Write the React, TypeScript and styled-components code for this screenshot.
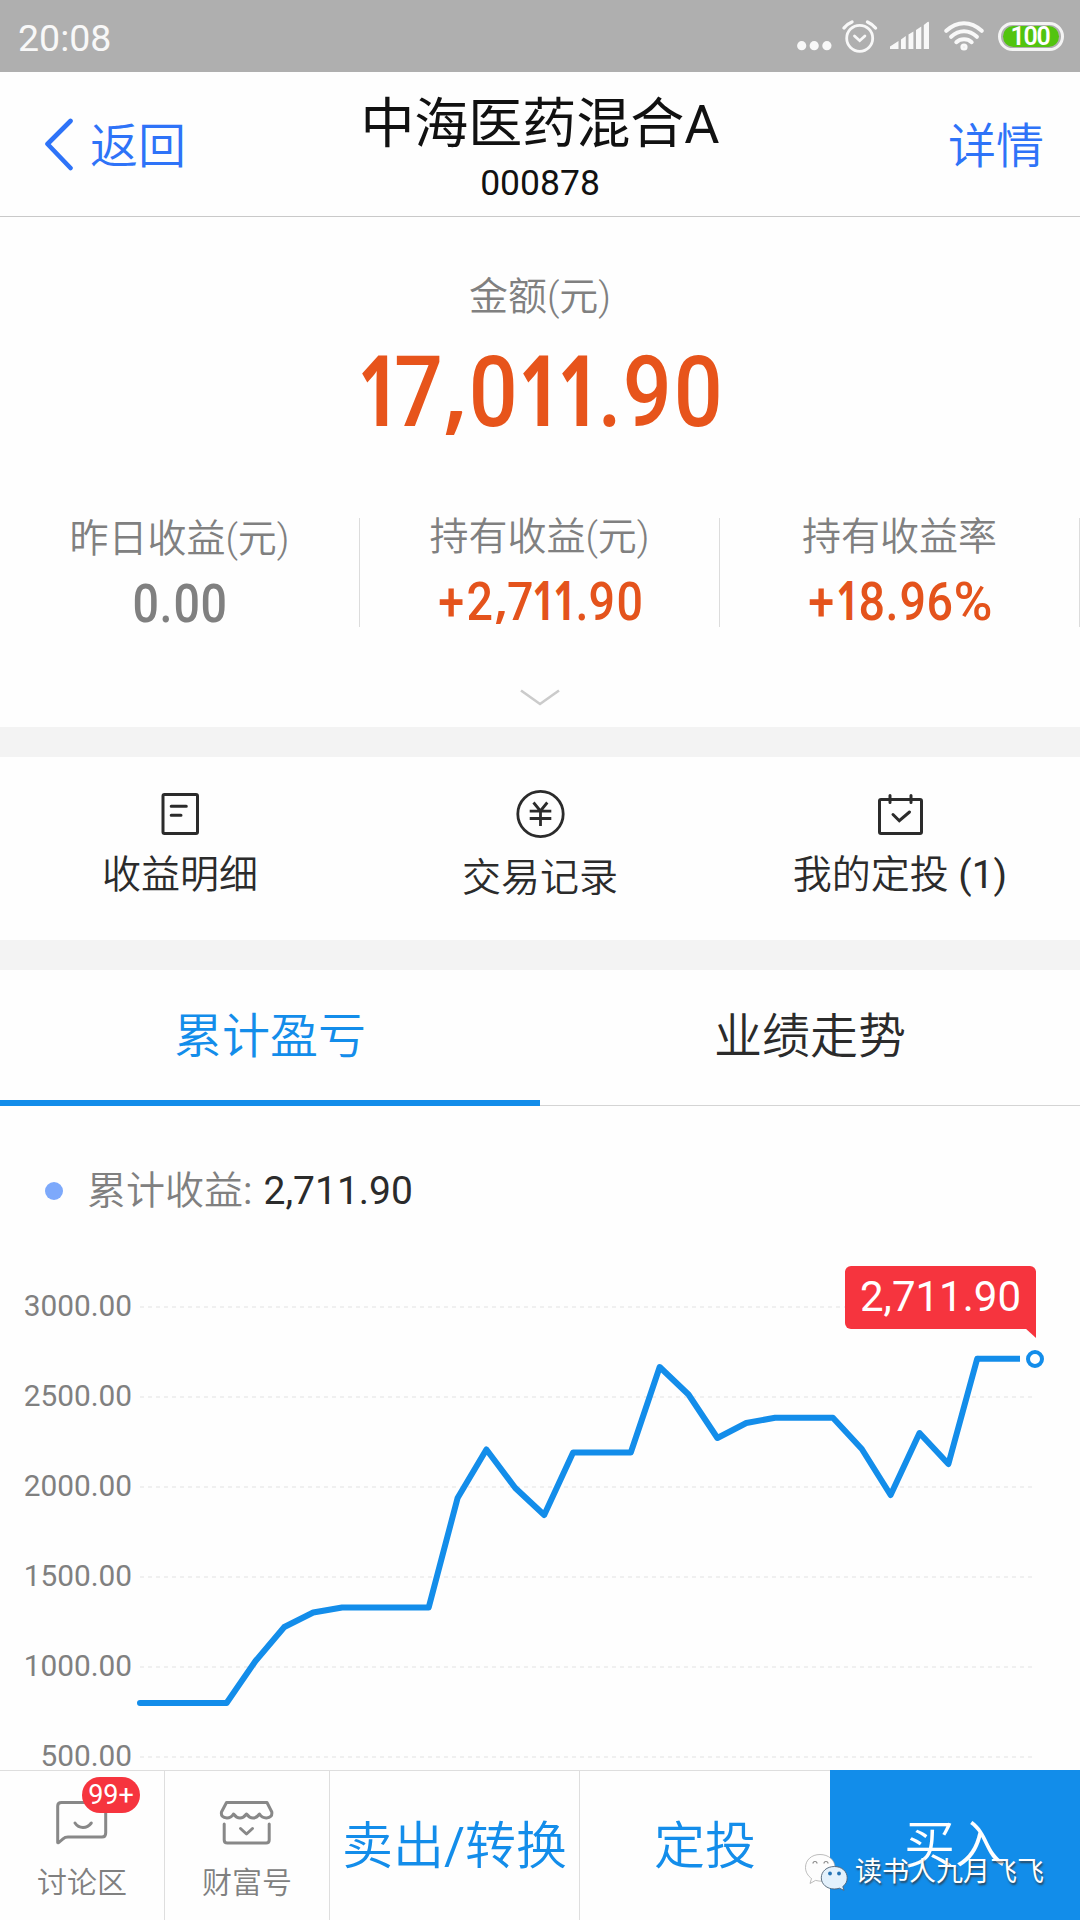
import React from "react";
import styled, { createGlobalStyle } from "styled-components";

const GlobalStyle = createGlobalStyle`
  *, *::before, *::after { box-sizing: border-box; }
  body {
    margin: 0;
    background: #fefefe;
    font-family: Roboto, "Noto Sans CJK SC", sans-serif;
    font-weight: 350;
    color: #2b2b2b;
  }
`;

const Screen = styled.div`
  width: 1080px;
  height: 1920px;
  display: flex;
  flex-direction: column;
  overflow: hidden;
  background: #fefefe;
`;

/* Latin runs inside light Chinese labels keep the regular weight. */
const Latin = styled.span`
  font-weight: 400;
`;

/* ---------- status bar ---------- */

const StatusBar = styled.div`
  flex: none;
  height: 72px;
  display: flex;
  align-items: center;
  justify-content: space-between;
  padding: 4px 16px 0 18px;
  background: #afafaf;
  color: #f8f8f8;
`;

const Clock = styled.span`
  font-size: 37.5px;
  font-weight: 400;
  line-height: 42px;
  margin-top: -1px;
`;

const StatusIcons = styled.div`
  display: flex;
  align-items: center;
  gap: 14.5px;
  margin-top: -4px;
`;

const Battery = styled.div`
  width: 66px;
  height: 29px;
  border: 3px solid #f4f4f4;
  border-radius: 15px;
  padding: 1px 2px;
  display: flex;
`;

const BatteryLevel = styled.div`
  flex: 1;
  border-radius: 11px;
  background: #52c40f;
  color: #fff;
  font-size: 25px;
  font-weight: 600;
  line-height: 21px;
  letter-spacing: -1.2px;
  text-indent: -2px;
  text-align: center;
`;

/* ---------- header ---------- */

const Header = styled.header`
  flex: none;
  height: 145px;
  display: grid;
  grid-template-columns: 250px 1fr 250px;
  border-bottom: 1px solid #c9c9c9;
`;

const HeaderLink = styled.div<{ $end?: boolean }>`
  display: flex;
  align-items: center;
  justify-content: ${(p) => (p.$end ? "flex-end" : "flex-start")};
  gap: 16px;
  padding: ${(p) => (p.$end ? "5px 36px 0 0" : "5px 0 0 43px")};
  color: #2e73f8;
  font-size: 48px;
  line-height: 56px;

  svg {
    margin-bottom: 3px;
  }
`;

const TitleBlock = styled.div`
  display: flex;
  flex-direction: column;
  align-items: center;
  gap: 8px;
  padding-top: 23px;
  color: #111;
`;

const Title = styled.h1`
  margin: 0;
  font-size: 54px;
  font-weight: 400;
  line-height: 60px;
  white-space: nowrap;
`;

const FundCode = styled.div`
  font-size: 35.5px;
  font-weight: 400;
  line-height: 40px;
`;

/* ---------- summary ---------- */

const Summary = styled.section`
  flex: none;
  height: 510px;
  display: flex;
  flex-direction: column;
  align-items: center;
  padding-top: 57px;
`;

const Label = styled.div`
  color: #808080;
  font-size: 39px;
  line-height: 46px;
  white-space: nowrap;
`;

const Figure = styled.div<{ $size: number; $color: string }>`
  display: flex;
  justify-content: center;
  color: ${(p) => p.$color};
  font-size: ${(p) => p.$size}px;
  font-weight: 500;
`;

const Glyph = styled.span<{ $w: number }>`
  width: ${(p) => p.$w}em;
  display: flex;
  justify-content: center;
  transform: scaleX(0.88);
`;

/* The numeral one comes from Open Sans, whose flag is short enough for the narrow cell. */
const GlyphOne = styled(Glyph)`
  font-family: "Open Sans", sans-serif;
  font-weight: 700;
  transform: translate(0.015em, -0.047em) scaleX(0.72);
`;

const GlyphComma = styled(Glyph)`
  font-family: "Open Sans", sans-serif;
  font-weight: 600;
  transform: translate(0.01em, -0.09em);
`;

const GlyphWide = styled(Glyph)`
  transform: none;
`;

const AmountRow = styled.div`
  margin-top: 23px;
  line-height: 100px;
`;

const Stats = styled.div`
  align-self: stretch;
  display: flex;
  margin-top: 71px;
`;

const Stat = styled.div<{ $shift?: number }>`
  width: 359px;
  display: flex;
  flex-direction: column;
  align-items: center;
  gap: 14px;
  padding-top: ${(p) => p.$shift ?? 0}px;
  line-height: 56px;
`;

const StatDivider = styled.div`
  width: 1px;
  height: 109px;
  margin-top: 4px;
  background: #dcdcdc;
`;

const ExpandArrow = styled.div`
  margin-top: 56px;
  line-height: 0;
`;

const Band = styled.div`
  flex: none;
  height: 30px;
  background: #f3f3f3;
`;

/* ---------- actions ---------- */

const Actions = styled.nav`
  flex: none;
  height: 183px;
  display: grid;
  grid-template-columns: repeat(3, 1fr);
`;

const Action = styled.div<{ $drop?: number }>`
  display: flex;
  flex-direction: column;
  align-items: center;
  padding-top: 31px;
  font-size: 39px;
  line-height: 46px;

  svg {
    flex: none;
    margin-bottom: ${(p) => 12 + (p.$drop ?? 0)}px;
  }
`;

/* ---------- tabs ---------- */

const Tabs = styled.div`
  flex: none;
  height: 136px;
  display: flex;
`;

const Tab = styled.div<{ $active?: boolean }>`
  flex: 1;
  display: flex;
  justify-content: center;
  padding-top: 37px;
  font-size: 48px;
  line-height: 60px;
  color: ${(p) => (p.$active ? "#138dea" : "#2b2b2b")};
  border-bottom: ${(p) => (p.$active ? "6px solid #138dea" : "1px solid #d4d4d4")};
`;

/* ---------- chart ---------- */

const ChartPanel = styled.section`
  flex: none;
  height: 664px;
  padding-top: 62px;
`;

const Legend = styled.div`
  height: 46px;
  display: flex;
  align-items: center;
  padding-left: 45px;
  font-size: 39px;
  line-height: 46px;
  color: #808080;
`;

const LegendDot = styled.span`
  width: 18px;
  height: 18px;
  border-radius: 50%;
  margin-right: 24px;
  background: #7da9fb;
`;

const LegendValue = styled.span`
  margin-left: 11px;
  color: #2b2b2b;
  font-weight: 400;
`;

const ChartBody = styled.div`
  position: relative;
  height: 556px;
  display: flex;
`;

const AxisLabels = styled.div`
  width: 132px;
  padding-top: 80px;
  display: flex;
  flex-direction: column;
  gap: 66px;
  color: #808080;
  font-size: 29.8px;
  font-weight: 400;
  line-height: 24px;
  text-align: right;
`;

const Plot = styled.svg`
  flex: none;
  display: block;
`;

const Tooltip = styled.div`
  position: absolute;
  left: 845px;
  top: 52px;
  width: 191px;
  height: 63px;
  border-radius: 6px 6px 0 6px;
  background: #f6343e;
  color: #fff;
  font-size: 42px;
  font-weight: 400;
  line-height: 62px;
  text-align: center;

  &::after {
    content: "";
    position: absolute;
    right: 0;
    top: 62px;
    border-top: 10px solid #f6343e;
    border-left: 11px solid transparent;
  }
`;

/* ---------- bottom bar ---------- */

const BottomBar = styled.footer`
  position: relative;
  flex: none;
  height: 150px;
  display: grid;
  grid-template-columns: 165px 165px 250px 250px 250px;
`;

const ShortcutCell = styled.div`
  display: flex;
  flex-direction: column;
  align-items: center;
  padding-top: 28px;
  border-top: 1px solid #dedede;
  border-right: 1px solid #dedede;
  color: #808080;
  font-size: 30px;
  line-height: 36px;
`;

const IconBox = styled.div`
  position: relative;
  height: 49px;
  margin-bottom: 17px;
`;

const Badge = styled.span`
  position: absolute;
  left: 28px;
  top: -22px;
  width: 58px;
  height: 36px;
  border-radius: 18px;
  background: #f6343e;
  color: #fff;
  font-size: 27px;
  font-weight: 400;
  line-height: 36px;
  text-align: center;
`;

const TradeCell = styled.div<{ $primary?: boolean; $ruled?: boolean }>`
  display: flex;
  justify-content: center;
  padding-top: 46px;
  border-top: ${(p) => (p.$primary ? "none" : "1px solid #dedede")};
  border-right: ${(p) => (p.$ruled ? "1px solid #dedede" : "none")};
  background: ${(p) => (p.$primary ? "#128dea" : "transparent")};
  color: ${(p) => (p.$primary ? "#fff" : "#138dea")};
  font-size: 51px;
  line-height: 60px;
  white-space: nowrap;
`;

const Watermark = styled.div`
  position: absolute;
  left: 804px;
  top: 81px;
  display: flex;
  align-items: center;
  gap: 6px;
  color: #fff;
  font-size: 27px;
  font-weight: 400;
  line-height: 42px;
  text-shadow: 1px 2px 2px rgba(50, 50, 50, 0.8);
`;

const ADVANCE: Record<string, number> = {
  "1": 0.4,
  "7": 0.46,
  ",": 0.27,
  ".": 0.26,
  "+": 0.57,
  "%": 0.75,
};

const CELLS: Record<string, typeof Glyph> = {
  "1": GlyphOne,
  ",": GlyphComma,
  "%": GlyphWide,
};

function Digits({ text, size, color }: { text: string; size: number; color: string }) {
  return (
    <Figure $size={size} $color={color}>
      {text.split("").map((c, i) => {
        const Cell = CELLS[c] ?? Glyph;
        return (
          <Cell key={i} $w={ADVANCE[c] ?? 0.515}>
            {c}
          </Cell>
        );
      })}
    </Figure>
  );
}

const STEP = 28.87;
const SERIES: [number, number][] = [
  [0, 1703], [3, 1703], [4, 1661], [5, 1627], [6, 1612.5], [7, 1607.5], [10, 1607.5],
  [11, 1498], [12, 1449.5], [13, 1488], [14, 1515], [15, 1452.5], [17, 1452.5],
  [18, 1367], [19, 1394.5], [20, 1438], [21, 1423], [22, 1417.7], [24, 1417.7],
  [25, 1449], [26, 1495], [27, 1433], [28, 1464], [29, 1358.7],
];
const TOP = 1214;
const points = SERIES.map(([i, y]) => `${(8 + i * STEP).toFixed(1)},${y - TOP}`).join(" ");
const GRID = [1307, 1397, 1487, 1577, 1667, 1757];
const TICKS = ["3000.00", "2500.00", "2000.00", "1500.00", "1000.00", "500.00"];

export default function App() {
  return (
    <>
      <GlobalStyle />
      <Screen>
        <StatusBar>
          <Clock>20:08</Clock>
          <StatusIcons>
            <svg width="132" height="36" viewBox="797 18 132 36" fill="none" stroke="#f8f8f8">
              <g fill="#f8f8f8" stroke="none">
                <circle cx="801.7" cy="45.7" r="4.6" />
                <circle cx="814.2" cy="45.7" r="4.6" />
                <circle cx="826.9" cy="45.7" r="4.6" />
                <path d="M890 49V46.5L898.5 41V49Z M901 49V39.5L905.8 36V49Z M908.5 49V34.6L913.4 31.4V49Z M916 49V30L921.3 26.6V49Z M923.8 49V25L927.5 22Q929 21 929 23V49Z" />
              </g>
              <circle cx="859.7" cy="38.3" r="13" strokeWidth="2.8" />
              <path d="M844 28 Q847 24 852 22 M867.5 22 Q872 24 875.5 28" strokeWidth="3.4" strokeLinecap="round" />
              <path d="M854.5 36L859.7 40.7L864.9 36" strokeWidth="2.8" strokeLinecap="round" />
            </svg>
            <svg width="40" height="36" viewBox="943.5 18 40 36" fill="none" stroke="#f8f8f8" strokeWidth="4" strokeLinecap="round">
              <path d="M945.8 30.8Q954 23.2 963.5 23.2T981.2 30.8" />
              <path d="M950.6 36.8Q956.5 31.3 963.5 31.3T976.4 36.8" />
              <path d="M955.8 42.2Q959 39.3 963.5 39.3T971.2 42.2" />
              <circle cx="963.5" cy="47" r="1.6" />
            </svg>
            <Battery>
              <BatteryLevel>100</BatteryLevel>
            </Battery>
          </StatusIcons>
        </StatusBar>

        <Header>
          <HeaderLink>
            <svg width="31" height="54" viewBox="0 0 31 54" fill="none" stroke="#2e73f8" strokeWidth="4.6" strokeLinecap="round" strokeLinejoin="round">
              <path d="M27.5 3L4.5 26L27.5 50" />
            </svg>
            返回
          </HeaderLink>
          <TitleBlock>
            <Title>中海医药混合A</Title>
            <FundCode>000878</FundCode>
          </TitleBlock>
          <HeaderLink $end>详情</HeaderLink>
        </Header>

        <Summary>
          <Label>金额(元)</Label>
          <AmountRow>
            <Digits text="17,011.90" size={98} color="#e7541b" />
          </AmountRow>
          <Stats>
            <Stat $shift={2}>
              <Label>昨日收益(元)</Label>
              <Digits text="0.00" size={53} color="#808080" />
            </Stat>
            <StatDivider />
            <Stat>
              <Label>持有收益(元)</Label>
              <Digits text="+2,711.90" size={53} color="#e4531c" />
            </Stat>
            <StatDivider />
            <Stat>
              <Label>持有收益率</Label>
              <Digits text="+18.96%" size={53} color="#e4531c" />
            </Stat>
            <StatDivider />
          </Stats>
          <ExpandArrow>
            <svg width="42" height="20" viewBox="0 0 42 20" fill="none" stroke="#cbcbcb" strokeWidth="2.6">
              <path d="M2 2.5L21 16L40 2.5" />
            </svg>
          </ExpandArrow>
        </Summary>

        <Band />

        <Actions>
          <Action>
            <svg width="50" height="52" viewBox="155 788 50 52" fill="none" stroke="#2b2b2b" strokeWidth="3" strokeLinecap="round">
              <rect x="163" y="794.5" width="34.5" height="39" rx="1.5" />
              <path d="M171.2 806.3H186.3M171.2 815.3H181" />
            </svg>
            收益明细
          </Action>
          <Action $drop={3}>
            <svg width="52" height="52" viewBox="514.5 788 52 52" fill="none" stroke="#2b2b2b" strokeWidth="2.8">
              <circle cx="541" cy="814" r="22.7" />
              <path d="M534 802.5L540.9 811L547.8 802.5M530.2 811.2H551.8M530.2 818.5H551.8M541 811V826" />
            </svg>
            交易记录
          </Action>
          <Action>
            <svg width="50" height="52" viewBox="875 788 50 52" fill="none" stroke="#2b2b2b" strokeWidth="3" strokeLinecap="round">
              <rect x="879.5" y="799.5" width="42" height="34" rx="1.5" />
              <path d="M890 795.5V802.5M911 795.5V802.5M893 814.5L899.3 820.7L909.5 812" />
            </svg>
            <span>
              我的定投 <Latin>(1)</Latin>
            </span>
          </Action>
        </Actions>

        <Band />

        <Tabs>
          <Tab $active>累计盈亏</Tab>
          <Tab>业绩走势</Tab>
        </Tabs>

        <ChartPanel>
          <Legend>
            <LegendDot />
            累计收益<Latin>:</Latin>
            <LegendValue>2,711.90</LegendValue>
          </Legend>
          <ChartBody>
            <AxisLabels>
              {TICKS.map((t) => (
                <div key={t}>{t}</div>
              ))}
            </AxisLabels>
            <Plot width="948" height="556" viewBox="0 0 948 556" fill="none">
              {GRID.map((y) => (
                <path key={y} d={`M8 ${y - TOP}H900`} stroke="#ececec" strokeWidth="1.6" strokeDasharray="4 4" />
              ))}
              <path d="M845.7 144.7H888" stroke="#138dea" strokeWidth="6" />
              <polyline points={points} stroke="#138dea" strokeWidth="6" strokeLinecap="round" strokeLinejoin="round" />
              <circle cx="903" cy="145" r="7" stroke="#138dea" strokeWidth="4" fill="#fff" />
            </Plot>
            <Tooltip>2,711.90</Tooltip>
          </ChartBody>
        </ChartPanel>

        <BottomBar>
          <ShortcutCell>
            <IconBox>
              <svg width="56" height="48" viewBox="55 1799 56 48" fill="none" stroke="#888" strokeWidth="3" strokeLinecap="round" strokeLinejoin="round">
                <path d="M58.7 1842.5V1806Q58.7 1802.5 62.5 1802.5H103Q106.7 1802.5 106.7 1806V1833Q106.7 1837 103 1837H69Q66 1837 64 1838.8L61 1841.5Q59 1843.3 58.7 1842.5" />
                <path d="M76 1823Q79 1827.5 84 1827.5T92.3 1823" />
              </svg>
              <Badge>99+</Badge>
            </IconBox>
            讨论区
          </ShortcutCell>
          <ShortcutCell>
            <IconBox>
              <svg width="56" height="48" viewBox="219.5 1799 56 48" fill="none" stroke="#888" strokeWidth="3" strokeLinecap="round" strokeLinejoin="round">
                <path d="M227 1802.5H267.5L272.3 1812Q273 1817.7 267 1817.9Q262.5 1818 260 1814Q257 1818 253.5 1818T247 1814Q244 1818 240.5 1818T234 1814Q231.5 1818 227.5 1818Q221 1817.5 222 1812Z" />
                <path d="M224.7 1824V1840Q224.7 1843 228 1843H266.5Q269.7 1843 269.7 1840V1824" />
                <path d="M241 1828.5L247 1834L253 1828.5" />
              </svg>
            </IconBox>
            财富号
          </ShortcutCell>
          <TradeCell $ruled>
            卖出<Latin>/</Latin>转换
          </TradeCell>
          <TradeCell>定投</TradeCell>
          <TradeCell $primary>买入</TradeCell>
          <Watermark>
            <svg width="45" height="38" viewBox="805 1850 45 38">
              <path d="M821 1851.5C812.5 1851.5 806.5 1857 806.5 1864.5C806.5 1869 809 1873 812.5 1875.5L811 1880.5L816.5 1877.4Q824 1879.3 829 1876.5C833.5 1873.5 836 1870 836 1864.5C836 1857 829.5 1851.5 821 1851.5Z" fill="#fdfdfd" stroke="#a0a0a0" strokeWidth="0.7" />
              <path d="M835.3 1863.5C828 1863.5 822.3 1868.3 822.3 1874.8C822.3 1881.3 828 1886 835.3 1886Q838 1886 840.5 1885.2L845 1887.4L843.8 1883.5C846.8 1881.5 848.2 1878.3 848.2 1874.8C848.2 1868.3 842.7 1863.5 835.3 1863.5Z" fill="#e3f1fc" stroke="#4f6275" strokeWidth="0.9" />
              <path d="M814 1860.5A2 2 0 0 1 818 1860.5M825 1860.5A2 2 0 0 1 829 1860.5" fill="none" stroke="#888" strokeWidth="1.2" />
              <circle cx="831" cy="1870.5" r="1.9" fill="#2473b5" />
              <circle cx="840" cy="1870.5" r="1.9" fill="#2473b5" />
            </svg>
            读书人九月飞飞
          </Watermark>
        </BottomBar>
      </Screen>
    </>
  );
}
